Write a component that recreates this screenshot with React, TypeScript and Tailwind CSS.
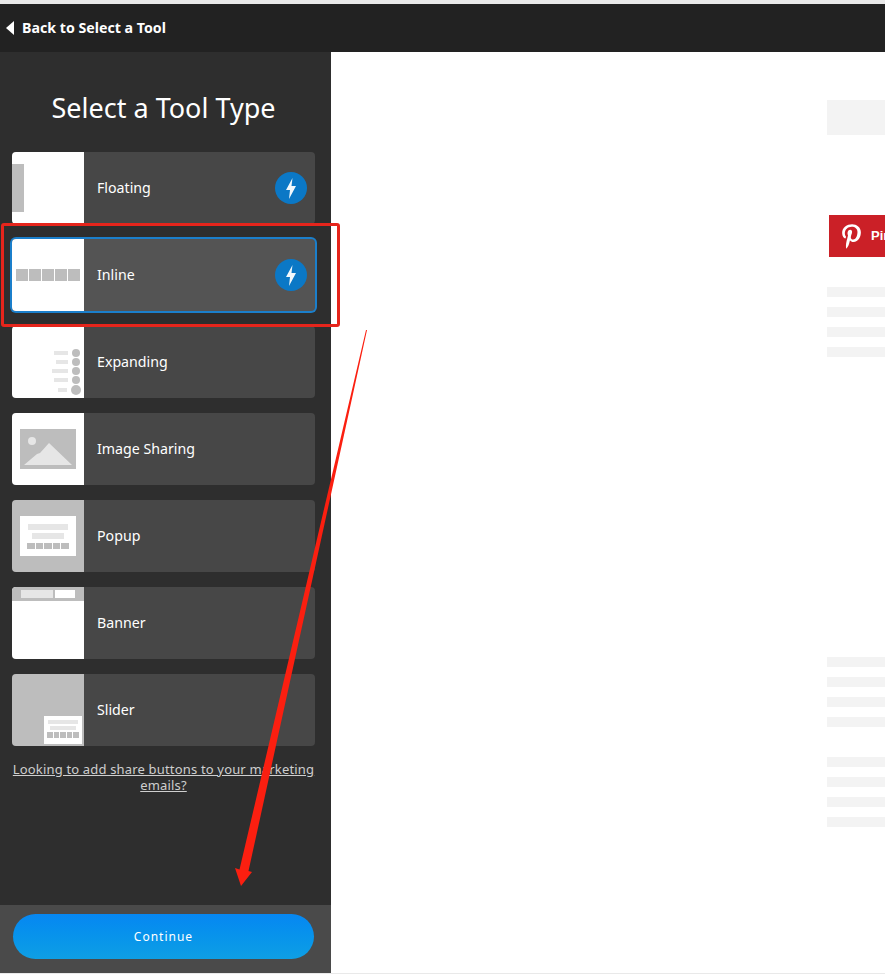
import { ReactNode } from "react"
import { FaPinterestP } from "react-icons/fa"

const font = { fontFamily: '"Noto Sans", "Open Sans", sans-serif' }

function Bolt() {
  return (
    <span className="w-8 h-8 rounded-full bg-[#0b78c6] flex items-center justify-center">
      <svg width="14" height="21" viewBox="0 0 14 21">
        <path d="M8.5 0 L2 12 H6 L5 21 L12 8 H7.5 Z" fill="#f2f8fc" />
      </svg>
    </span>
  )
}

function Squares({ count, className }: { count: number; className: string }) {
  return (
    <div className="flex gap-px">
      {Array.from({ length: count }).map((_, i) => (
        <div key={i} className={className} />
      ))}
    </div>
  )
}

const FloatingThumb = () => (
  <div className="h-full bg-white flex items-center">
    <div className="w-3 h-12 bg-[#bdbdbd]" />
  </div>
)

const InlineThumb = () => (
  <div className="h-full bg-white flex items-center justify-center">
    <Squares count={5} className="w-3 h-3 bg-[#bdbdbd]" />
  </div>
)

const ExpandingThumb = () => (
  <div className="h-full bg-white flex flex-col items-end justify-end pr-[3px] pb-[3px] gap-[1px]">
    {[14, 12, 16, 14, 9].map((w, i) => (
      <div key={i} className="flex items-center gap-1">
        <div className="h-1 bg-[#e6e6e6]" style={{ width: w }} />
        <div className={i === 4 ? "w-[10px] h-[10px] rounded-full bg-[#bdbdbd]" : "w-2 h-2 rounded-full bg-[#bdbdbd] mr-px"} />
      </div>
    ))}
  </div>
)

const ImageThumb = () => (
  <div className="h-full bg-white flex items-center justify-center">
    <svg width="56" height="40" viewBox="0 0 56 40">
      <rect width="56" height="40" fill="#bdbdbd" />
      <circle cx="12" cy="12" r="4" fill="#e6e6e6" />
      <path d="M4 36 L17 25 L20 24 L29 14 L52 36 Z" fill="#e6e6e6" />
    </svg>
  </div>
)

const PopupThumb = () => (
  <div className="h-full bg-[#bdbdbd] flex items-center justify-center">
    <div className="w-14 h-10 bg-white flex flex-col items-center pt-2 gap-[3px]">
      <div className="w-10 h-[6px] bg-[#e6e6e6]" />
      <div className="w-8 h-[6px] bg-[#e6e6e6]" />
      <div className="mt-px">
        <Squares count={5} className="w-[7.6px] h-[6px] bg-[#bdbdbd]" />
      </div>
    </div>
  </div>
)

const BannerThumb = () => (
  <div className="h-full bg-white">
    <div className="h-[14px] bg-[#bdbdbd] flex items-center pl-[9px] gap-[2px]">
      <div className="w-8 h-2 bg-[#e6e6e6]" />
      <div className="w-5 h-2 bg-white" />
    </div>
  </div>
)

const SliderThumb = () => (
  <div className="h-full bg-[#bdbdbd] flex items-end justify-end p-[2px]">
    <div className="w-[38px] h-7 bg-white flex flex-col items-center pt-1 gap-[2px]">
      <div className="w-[30px] h-1 bg-[#e6e6e6]" />
      <div className="w-[26px] h-1 bg-[#e6e6e6]" />
      <Squares count={5} className="w-[5.6px] h-[6px] bg-[#bdbdbd]" />
    </div>
  </div>
)

function ToolCard({ label, thumb, bolt, selected }: { label: string; thumb: ReactNode; bolt?: boolean; selected?: boolean }) {
  return (
    <div
      className={
        selected
          ? "h-[72px] rounded flex overflow-hidden bg-[#545454] ring-2 ring-[#1b7fcb]"
          : "h-[72px] rounded flex overflow-hidden bg-[#474747]"
      }
    >
      <div className="w-[72px] shrink-0">{thumb}</div>
      <div className="flex-1 flex items-center justify-between pl-[13px] pr-2">
        <span className="text-[14.2px] text-white">{label}</span>
        {bolt && <Bolt />}
      </div>
    </div>
  )
}

function Skeleton() {
  return <div className="w-[300px] h-[10px] bg-[#f3f3f3]" />
}

function SkeletonGroup({ className }: { className: string }) {
  return (
    <div className={"flex flex-col gap-[10px] " + className}>
      <Skeleton />
      <Skeleton />
      <Skeleton />
      <Skeleton />
    </div>
  )
}

export default function App() {
  return (
    <div className="relative w-[885px] h-[974px] overflow-hidden bg-[#e9e9e9] pt-1 flex flex-col" style={font}>
      <header className="h-12 shrink-0 bg-[#222222] flex items-center pl-[6px] gap-2">
        <svg width="8" height="14" viewBox="0 0 8 14">
          <path d="M8 0 V14 L0 7 Z" fill="#fff" />
        </svg>
        <span className="text-[14.2px] font-bold text-white leading-none pt-px">Back to Select a Tool</span>
      </header>

      <div className="flex-1 flex min-h-0 pb-px">
        <aside className="w-[331px] shrink-0 bg-[#2e2e2e] flex flex-col">
          <h1 className="text-[27px] text-white text-center leading-none mt-[42px] mb-[31px] pr-1">Select a Tool Type</h1>
          <div className="flex flex-col gap-[15px] pl-3 pr-4">
            <ToolCard label="Floating" thumb={<FloatingThumb />} bolt />
            <ToolCard label="Inline" thumb={<InlineThumb />} bolt selected />
            <ToolCard label="Expanding" thumb={<ExpandingThumb />} />
            <ToolCard label="Image Sharing" thumb={<ImageThumb />} />
            <ToolCard label="Popup" thumb={<PopupThumb />} />
            <ToolCard label="Banner" thumb={<BannerThumb />} />
            <ToolCard label="Slider" thumb={<SliderThumb />} />
          </div>
          <a className="block mt-[15px] pl-3 pr-4 text-center text-[13px] leading-4 text-[#cfcfcf] underline tracking-[0.17px]">
            Looking to add share buttons to your marketing emails?
          </a>
          <div className="mt-auto h-[68px] bg-[#4a4a4a] flex items-start pt-[9px] pl-[13px] pr-[17px]">
            <button className="w-full h-[45px] rounded-full bg-gradient-to-b from-[#0787f2] to-[#0f9fe4] text-[12px] tracking-[1px] text-white">
              Continue
            </button>
          </div>
        </aside>

        <main className="flex-1 bg-white overflow-hidden pl-[496px] pt-12">
          <div className="w-[300px] h-[35px] bg-[#f3f3f3]" />
          <div className="mt-20 ml-[2px] w-[56px] h-[42px] bg-[#cb2027] flex items-center pl-[10px] gap-[7px] text-white overflow-hidden whitespace-nowrap">
            <FaPinterestP size={25} className="shrink-0" />
            <span className="text-[13px] font-bold" style={{ fontFamily: '"Liberation Sans", sans-serif' }}>Pin</span>
          </div>
          <SkeletonGroup className="mt-[30px]" />
          <SkeletonGroup className="mt-[300px]" />
          <SkeletonGroup className="mt-[30px]" />
        </main>
      </div>

      {/* annotations drawn over the screenshot */}
      <div className="absolute left-[1px] top-[223px] w-[339px] h-[104px] border-[3px] border-[#e6251c] rounded-[3px]" />
      <svg className="absolute left-0 top-0 pointer-events-none" width="885" height="974" viewBox="0 0 885 974">
        <path d="M366 330 L367 330 L248.5 871 L252 872 L241 886 L235 868 L239.5 869.5 Z" fill="#fb1f10" />
      </svg>
    </div>
  )
}
